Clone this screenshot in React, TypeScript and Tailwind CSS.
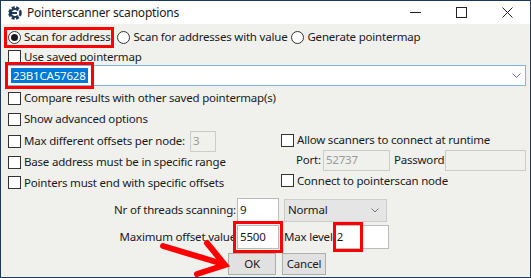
import React from 'react';

function Box() {
    return <span className="inline-block w-[13px] h-[13px] shrink-0 border border-[#333333] bg-white" />;
}

function Radio({ on }: { on?: boolean }) {
    return (
        <span className="inline-flex w-[13px] h-[13px] shrink-0 items-center justify-center rounded-full border border-[#333333] bg-white">
            {on && <span className="w-[7px] h-[7px] rounded-full bg-[#1a1a1a]" />}
        </span>
    );
}

function Check({ label, className }: { label: string; className?: string }) {
    return (
        <div className={`flex items-center gap-[3px] ${className || ''}`}>
            <Box />
            <span>{label}</span>
        </div>
    );
}

export default function App() {
    return (
        <div className="relative w-[531px] h-[278px] overflow-hidden border border-[#1b3b5c] bg-[#f0f0ed] font-['Noto_Sans',sans-serif] text-[11.5px] tracking-[-0.2px] leading-none text-[#1a1a1a]">
            {/* title bar */}
            <div className="flex h-[23px] items-center bg-white">
                <svg width="16" height="16" viewBox="0 0 16 16" className="ml-[5px]">
                    <circle cx="9" cy="8" r="5.5" fill="none" stroke="#1f3a57" strokeWidth="2.6" strokeDasharray="3 1.4" />
                    <path d="M12 5.5 A4 4 0 1 0 12 10.5" fill="none" stroke="#1f3a57" strokeWidth="2" />
                    <rect x="3" y="7" width="8" height="2" fill="#1f3a57" />
                </svg>
                <span className="ml-[5px] text-[12px]">Pointerscanner scanoptions</span>
                <div className="ml-auto flex h-full items-center">
                    <div className="flex w-[46px] h-full items-center justify-center">
                        <span className="w-[11px] h-px bg-[#222]" />
                    </div>
                    <div className="flex w-[46px] h-full items-center justify-center">
                        <span className="w-[11px] h-[11px] border border-[#222]" />
                    </div>
                    <div className="flex w-[46px] h-full items-center justify-center">
                        <svg width="11" height="11" viewBox="0 0 11 11">
                            <path d="M0.5 0.5 L10.5 10.5 M10.5 0.5 L0.5 10.5" stroke="#222" strokeWidth="1" />
                        </svg>
                    </div>
                </div>
            </div>

            {/* scan mode */}
            <div className="flex h-[24px] items-center pl-[7px] pt-[2px]">
                <div className="flex items-center gap-[3px] outline-[3px] outline-[#ff0000] outline-offset-[1px]">
                    <Radio on />
                    <span>Scan for address</span>
                </div>
                <div className="ml-[7px] flex items-center gap-[3px]">
                    <Radio />
                    <span>Scan for addresses with value</span>
                </div>
                <div className="ml-[4px] flex items-center gap-[3px]">
                    <Radio />
                    <span>Generate pointermap</span>
                </div>
            </div>

            <Check label="Use saved pointermap" className="h-[17px] pl-[7px]" />

            {/* combobox */}
            <div className="mx-[4px] flex h-[21px] items-center border border-[#7eb4ea] bg-white pl-[5px] pr-[4px]">
                <span className="bg-[#0078d7] px-[2px] py-[2px] text-white outline-[3px] outline-[#ff0000] outline-offset-[3px]">23B1CA57628</span>
                <svg width="9" height="6" viewBox="0 0 9 6" className="ml-auto">
                    <path d="M0.5 0.5 L4.5 4.5 L8.5 0.5" fill="none" stroke="#777" strokeWidth="1" />
                </svg>
            </div>

            <Check label="Compare results with other saved pointermap(s)" className="mt-[2px] h-[20px] pl-[7px]" />
            <Check label="Show advanced options" className="h-[22px] pl-[7px]" />

            {/* options */}
            <div className="flex">
                <div className="w-[280px] pl-[7px]">
                    <div className="flex h-[22px] items-center gap-[3px]">
                        <Box />
                        <span>Max different offsets per node:</span>
                        <span className="ml-[2px] flex h-[21px] w-[26px] items-center border border-[#cccccc] pl-[2px] text-[#9a9a9a]">3</span>
                    </div>
                    <Check label="Base address must be in specific range" className="h-[20px]" />
                    <Check label="Pointers must end with specific offsets" className="h-[21px]" />
                </div>
                <div className="flex-1">
                    <Check label="Allow scanners to connect at runtime" className="h-[19px] pt-[1px]" />
                    <div className="flex h-[22px] items-center pl-[15px]">
                        <span>Port:</span>
                        <span className="ml-[2px] flex h-[21px] w-[67px] items-center border border-[#cccccc] pl-[2px] text-[#9a9a9a]">52737</span>
                        <span className="ml-[4px]">Password</span>
                        <span className="ml-auto mr-[4px] h-[21px] w-[81px] border border-[#cccccc]" />
                    </div>
                    <Check label="Connect to pointerscan node" className="h-[19px]" />
                </div>
            </div>

            {/* threads / offsets */}
            <div className="mt-[5px] flex h-[24px] items-center">
                <span className="w-[235px] text-right">Nr of threads scanning:</span>
                <span className="ml-[1px] flex h-[24px] w-[42px] items-center border border-[#bbbbbb] bg-white pl-[2px]">9</span>
                <div className="ml-[5px] flex h-[23px] w-[103px] items-center border border-[#cccccc] bg-[#e5e5e5] pl-[3px] pr-[7px]">
                    <span>Normal</span>
                    <svg width="8" height="5" viewBox="0 0 8 5" className="ml-auto">
                        <path d="M0.5 0.5 L4 4 L7.5 0.5" fill="none" stroke="#777" strokeWidth="1" />
                    </svg>
                </div>
            </div>
            <div className="mt-[3px] flex h-[24px] items-center">
                <span className="w-[235px] text-right">Maximum offset value</span>
                <span className="ml-[1px] flex h-[24px] w-[42px] items-center border border-[#bbbbbb] bg-white pl-[2px] outline-[3px] outline-[#ff0000] outline-offset-[1px]">5500</span>
                <span className="ml-[5px]">Max level</span>
                <div className="ml-[1px] flex h-[24px] w-[55px] items-center border border-[#bbbbbb] bg-white pl-[2px]">
                    <span className="flex h-[24px] w-[24px] items-center outline-[3px] outline-[#ff0000] -ml-[1px] pl-[1px]">2</span>
                </div>
            </div>
            <div className="mt-[4px] flex items-center pl-[227px]">
                <button className="h-[22px] w-[48px] border border-[#adadad] bg-[#e1e1e1] leading-none">OK</button>
                <button className="ml-[6px] h-[22px] w-[44px] border border-[#adadad] bg-[#e1e1e1] leading-none">Cancel</button>
            </div>

            {/* red arrow annotation */}
            <svg className="absolute left-[150px] top-[235px]" width="90" height="43" viewBox="0 0 90 43">
                <path d="M12 10 L72 28" stroke="#ff0000" strokeWidth="6" strokeLinecap="round" />
                <path d="M56 7 L74 29 L46 38" fill="none" stroke="#ff0000" strokeWidth="6" strokeLinejoin="miter" strokeLinecap="round" />
            </svg>
        </div>
    );
}
